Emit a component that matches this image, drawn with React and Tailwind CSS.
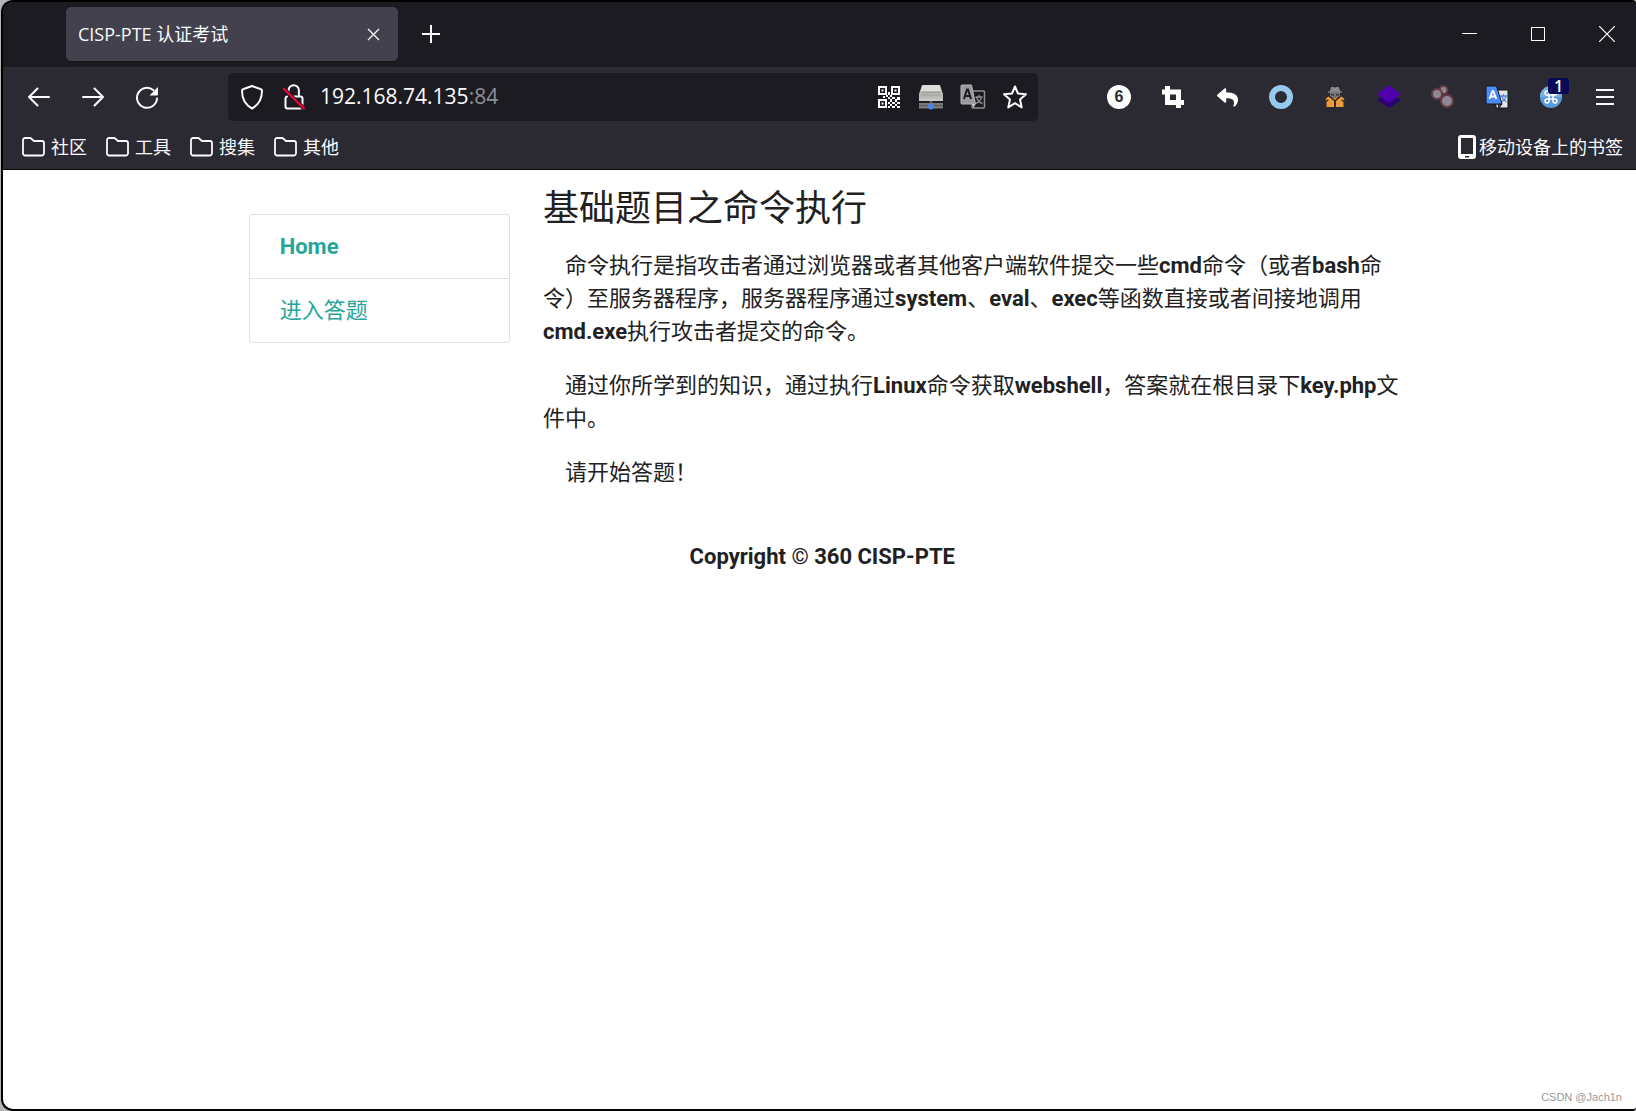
import React from "react";
import { FaReply } from "react-icons/fa";

const FOLDERS = ["社区", "工具", "搜集", "其他"];

const BackIcon = () => (
  <svg width="22" height="20" viewBox="0 0 22 20" fill="none" stroke="#fbfbfe" strokeWidth="2" strokeLinecap="round" strokeLinejoin="round">
    <path d="M21 10H1M9.500 1.500 1 10l8.500 8.500" />
  </svg>
);

const ForwardIcon = () => (
  <svg width="22" height="20" viewBox="0 0 22 20" fill="none" stroke="#fbfbfe" strokeWidth="2" strokeLinecap="round" strokeLinejoin="round">
    <path d="M1 10h20M12.500 1.500 21 10l-8.500 8.500" />
  </svg>
);

const ReloadIcon = () => (
  <svg width="24" height="24" viewBox="0 0 24 24" fill="none" stroke="#fbfbfe" strokeWidth="2" strokeLinecap="round">
    <path d="M22 13.500A10 10 0 1 1 18.500 5.200" />
    <path d="M23 2v7.500a1 1 0 0 1-1 1h-7.500z" fill="#fbfbfe" stroke="none" />
  </svg>
);

const ShieldIcon = () => (
  <svg width="24" height="26" viewBox="0 0 24 26" fill="none" stroke="#fbfbfe" strokeWidth="2" strokeLinejoin="round">
    <path d="M12 2 21 5.300q1 .4 1 1.500C22 14.500 18.500 21 12 24.500 5.500 21 2 14.500 2 6.800q0-1.100 1-1.500z" />
  </svg>
);

const LockIcon = () => (
  <svg width="24" height="26" viewBox="0 0 24 26" fill="none" stroke="#fbfbfe" strokeWidth="2" strokeLinecap="round">
    <path d="M6.500 8V6.500a5.200 5.200 0 0 1 10.400 0V12" />
    <path d="M10 12.500h8.500a2 2 0 0 1 2 2v8a2 2 0 0 1-2 2h-13a2 2 0 0 1-2-2v-8q0-1.500 1.500-2" />
    <path d="M1.500 4.500 22 24.500" stroke="#1c1b22" strokeWidth="4" />
    <path d="M1.500 4.500 22 24.500" stroke="#ff0039" />
  </svg>
);

const QrIcon = () => (
  <svg width="22" height="22" viewBox="0 0 22 22" fill="#fbfbfe">
    <path fillRule="evenodd" d="M0 0h9v9H0zM2 2v5h5V2zM13 0h9v9h-9zM15 2v5h5V2zM0 13h9v9H0zM2 15v5h5v-5z" />
    <path d="M3.500 3.500h2v2h-2zM16.500 3.500h2v2h-2zM3.500 16.500h2v2h-2z" />
    <path d="M10 6h2v3h-2zM8 9h2v2H8zM12 9h2v2h-2zM5 10h2v2H5zM10 11h2v2h-2zM14 11h3v2h-3zM19 11h3v3h-3zM12 13h2v3h-2zM17 13h2v3h-2zM10 16h2v2h-2zM14 16h3v2h-3zM19 16h3v2h-3zM12 18h2v2h-2zM17 18h2v2h-2zM10 20h2v2h-2zM14 20h3v2h-3zM19 20h3v2h-3z" />
  </svg>
);

const DriveIcon = () => (
  <svg width="24" height="26" viewBox="0 0 24 26">
    <path d="M3 1h18l3 9v7H0v-7z" fill="#b9b9b6" />
    <path d="M3.500 1h17l1.500 6H2z" fill="#deded9" />
    <path d="M3 8h18v1H3zM2.500 10.500h19v1h-19z" fill="#9b9b98" />
    <path d="M0 14.500h24V17H0z" fill="#c8c8c5" />
    <path d="M10.500 17h3v3h-3z" fill="#5a5a5a" />
    <path d="M0 19h24v5.500H0z" fill="#7b7b79" />
    <path d="M0 21h24v1H0z" fill="#565655" />
    <circle cx="12" cy="22.500" r="3" fill="#4786e8" />
  </svg>
);

const PageTranslateIcon = () => (
  <svg width="26" height="26" viewBox="0 0 26 26">
    <rect x="12" y="7" width="12.500" height="17" rx="1" fill="#1c1b22" stroke="#8f8f92" strokeWidth="1.500" />
    <path d="M15.500 13h7M19 11v2M21.500 13c-.5 3-3 5.500-6 6.500M16.500 13c1 3 3 5.500 6 6.500" stroke="#8f8f92" strokeWidth="1.400" fill="none" />
    <path d="M2 1h9.500l4 19H2a1 1 0 0 1-1-1V2a1 1 0 0 1 1-1z" fill="#9a9a9c" stroke="#b5b5b7" />
    <path d="m12 20 3.500 0-2 4z" fill="#c7c7c8" />
    <path d="M4 15 7 5.500h1L11 15M5 12h5" stroke="#1c1b22" strokeWidth="2" fill="none" />
  </svg>
);

const StarIcon = () => (
  <svg width="24" height="24" viewBox="0 0 24 24" fill="none" stroke="#fbfbfe" strokeWidth="2" strokeLinejoin="round">
    <path d="m12 1.500 3 7 8 .7-6 5.200 1.700 8L12 18.200l-6.700 4.200 1.700-8L1 9.200l8-.7z" />
  </svg>
);

const CropIcon = () => (
  <svg width="22" height="22" viewBox="0 0 22 22" fill="none" stroke="#fff" strokeWidth="5">
    <path d="M0 6h16.500v16M5.500 0v16.500H22" />
  </svg>
);

const RingIcon = () => (
  <svg width="24" height="24" viewBox="0 0 24 24">
    <circle cx="12" cy="12" r="9" fill="none" stroke="#97c9ee" strokeWidth="6" />
  </svg>
);

const SpyIcon = () => (
  <svg width="20" height="22" viewBox="0 0 20 22">
    <path d="M5 5 6 1.500Q6.500.500 8 1l2 .6L12 1q1.500-.500 2 .5L15 5l2 .7v1H3v-1z" fill="#8a8a8a" />
    <path d="M5 7h10v2.500q-1 2-5 2t-5-2z" fill="#777" />
    <path d="M6 8h3v1.500H6zM11 8h3v1.500h-3z" fill="#333" />
    <path d="M6.500 10.500 10 12l3.500-1.500L10 14z" fill="#e8912d" />
    <path d="m.5 13 3-2.500L9 15v6H1.500v-5L4 14l-1.500-.5-1 1zM19.500 13l-3-2.500L11 15v6h7.500v-5L16 14l1.500-.5 1 1z" fill="#f09a36" />
  </svg>
);

const LayersIcon = () => (
  <svg width="26" height="24" viewBox="0 0 26 24">
    <path d="m1 15 12-7 12 7-12 8z" fill="#2b0073" />
    <path d="M13 0 25 9 13 18 1 9z" fill="#4e00ab" />
  </svg>
);

const DotsIcon = () => (
  <svg width="24" height="24" viewBox="0 0 24 24" fill="#8c8790" stroke="#663a42" strokeWidth="2">
    <circle cx="12.500" cy="5" r="4" />
    <circle cx="6" cy="9" r="5" />
    <circle cx="16" cy="16" r="6" />
  </svg>
);

const TranslateIcon = () => (
  <svg width="24" height="24" viewBox="0 0 24 24" stroke="#15151a" strokeLinejoin="round">
    <rect x="11" y="5" width="12" height="18" rx="1" fill="#e6e6e6" />
    <path d="M15 11h7M18.500 9v2M21 11c-.5 3-2.500 5-5 6M16.500 11c1 2.500 3 5 5 6" stroke="#5187e8" strokeWidth="1.300" fill="none" />
    <path d="m13 19 4 0-3 4z" fill="#2a56c6" />
    <path d="M2 1h9.500L17 19H2q-1 0-1-1V2q0-1 1-1z" fill="#4b8bf5" />
    <path d="m4.500 14 3-8h.8l3 8M5.500 11.500h5" stroke="#fff" strokeWidth="1.800" fill="none" />
  </svg>
);

const CommandIcon = () => (
  <svg width="22" height="22" viewBox="0 0 22 22">
    <circle cx="11" cy="11" r="11" fill="#5b9ad8" />
    <path d="M0 11a11 11 0 0 1 22 0z" fill="#76b0e6" />
    <path d="M9 9V7a2 2 0 1 0-2 2h8a2 2 0 1 0-2-2v8a2 2 0 1 0 2-2H7a2 2 0 1 0 2 2V9" fill="none" stroke="#fff" strokeWidth="1.500" />
  </svg>
);

const FolderIcon = () => (
  <svg width="23" height="20" viewBox="0 0 23 20" fill="none" stroke="#fbfbfe" strokeWidth="1.800" strokeLinejoin="round">
    <path d="M1 16.500V3a2 2 0 0 1 2-2h5.500L12 4h8a2 2 0 0 1 2 2v10.500a2.200 2.200 0 0 1-2 2H3a2 2 0 0 1-2-2z" />
  </svg>
);

const PhoneIcon = () => (
  <svg width="18" height="24" viewBox="0 0 18 24">
    <rect width="18" height="24" rx="3" fill="#fff" />
    <path d="M3 3h12v16H3z" fill="#2b2a33" />
    <path d="M7 21h4v1.500H7z" fill="#2b2a33" />
  </svg>
);

const TabBar = () => (
  <div className="flex h-[65px] items-center bg-[#1c1b22] pb-px pl-[63px] pr-[21px]">
    <div className="flex h-[54px] w-[332px] items-center justify-between rounded-[5px] bg-[#42414d] pl-3 pr-[18px] shadow">
      <span className="text-lg">CISP-PTE 认证考试</span>
      <button aria-label="关闭标签页">
        <svg width="13" height="13" viewBox="0 0 13 13" stroke="#fbfbfe" strokeWidth="1.300">
          <path d="m1 1 11 11M12 1 1 12" />
        </svg>
      </button>
    </div>
    <button aria-label="新建标签页" className="ml-6">
      <svg width="18" height="18" viewBox="0 0 18 18" stroke="#fbfbfe" strokeWidth="2">
        <path d="M9 0v18M0 9h18" />
      </svg>
    </button>
    <div className="ml-auto flex items-center gap-[53px]">
      <button aria-label="最小化">
        <svg width="16" height="16" viewBox="0 0 16 16" stroke="#fff">
          <path d="M1 7.500h15" />
        </svg>
      </button>
      <button aria-label="最大化">
        <svg width="16" height="16" viewBox="0 0 16 16" fill="none" stroke="#fff">
          <rect x="1.500" y="1.500" width="13" height="13" />
        </svg>
      </button>
      <button aria-label="关闭">
        <svg width="16" height="16" viewBox="0 0 16 16" stroke="#fff" strokeWidth="1.200">
          <path d="m0 0 16 16M16 0 0 16" />
        </svg>
      </button>
    </div>
  </div>
);

const ToolButton = ({ label, children }) => (
  <button aria-label={label} className="flex h-12 w-[54px] items-center justify-center">
    {children}
  </button>
);

const UrlButton = ({ label, children }) => (
  <button aria-label={label} className="flex h-12 w-[42px] items-center justify-center">
    {children}
  </button>
);

const NavBar = () => (
  <div className="flex items-center pl-[9px] pr-1 pt-[6px]">
    <ToolButton label="后退">
      <BackIcon />
    </ToolButton>
    <ToolButton label="前进">
      <ForwardIcon />
    </ToolButton>
    <ToolButton label="刷新">
      <ReloadIcon />
    </ToolButton>
    <div className="mx-[54px] flex h-12 flex-1 items-center rounded-[5px] bg-[#1c1b22] pl-[3px] pr-[2px]">
      <UrlButton label="跟踪保护">
        <ShieldIcon />
      </UrlButton>
      <UrlButton label="连接不安全">
        <LockIcon />
      </UrlButton>
      <a href="#" className="ml-[5px] flex-1 text-[21px]">
        192.168.74.135<span className="text-[#8f8f97]">:84</span>
      </a>
      <UrlButton label="二维码">
        <QrIcon />
      </UrlButton>
      <UrlButton label="代理">
        <DriveIcon />
      </UrlButton>
      <UrlButton label="翻译此页">
        <PageTranslateIcon />
      </UrlButton>
      <UrlButton label="添加书签">
        <StarIcon />
      </UrlButton>
    </div>
    <ToolButton label="计数">
      <span className="flex h-6 w-6 items-center justify-center rounded-full bg-white font-['Liberation_Sans'] text-base font-bold text-[#2b2a33]">
        6
      </span>
    </ToolButton>
    <ToolButton label="截图">
      <CropIcon />
    </ToolButton>
    <ToolButton label="撤销">
      <FaReply size={21} color="#fff" />
    </ToolButton>
    <ToolButton label="容器">
      <RingIcon />
    </ToolButton>
    <ToolButton label="隐私">
      <SpyIcon />
    </ToolButton>
    <ToolButton label="图层">
      <LayersIcon />
    </ToolButton>
    <ToolButton label="代理切换">
      <DotsIcon />
    </ToolButton>
    <ToolButton label="翻译">
      <TranslateIcon />
    </ToolButton>
    <ToolButton label="快捷命令">
      <span className="relative">
        <CommandIcon />
        <span className="absolute -right-[7px] -top-2 flex h-4 w-[21px] items-center justify-center rounded-[3px] bg-[#070b57] text-base font-semibold leading-4">
          1
        </span>
      </span>
    </ToolButton>
    <ToolButton label="菜单">
      <svg width="18" height="16" viewBox="0 0 18 16" stroke="#fbfbfe" strokeWidth="2">
        <path d="M0 1h18M0 8h18M0 15h18" />
      </svg>
    </ToolButton>
  </div>
);

const Bookmarks = () => (
  <div className="flex h-[49px] items-center justify-between border-b border-[#0c0c0d] pl-[19px] pr-[13px] pt-1 text-lg">
    <div className="flex gap-[19px]">
      {FOLDERS.map((name) => (
        <button key={name} className="flex items-center gap-[6px]">
          <FolderIcon />
          {name}
        </button>
      ))}
    </div>
    <button className="flex items-center gap-[3px]">
      <PhoneIcon />
      移动设备上的书签
    </button>
  </div>
);

const Page = () => (
  <main className="flex-1 bg-white font-[Roboto,'Noto_Sans_CJK_SC',sans-serif] text-[22px] leading-[33px] text-[#212121]">
    <div className="mx-auto flex w-[72%] px-px">
      <div className="w-1/4 px-4 pt-11">
        <nav className="rounded-[3px] border border-[#e0e0e0] text-[#26a69a]">
          <a href="#" className="block border-b border-[#e0e0e0] px-[30px] py-[15px] font-bold">
            Home
          </a>
          <a href="#" className="block px-[30px] py-[15px]">
            进入答题
          </a>
        </nav>
      </div>
      <div className="w-3/4 pl-[17px] pr-1 pt-5">
        <h1 className="text-4xl leading-[39px]">基础题目之命令执行</h1>
        <p className="mt-5 indent-[22px]">
          命令执行是指攻击者通过浏览器或者其他客户端软件提交一些<b>cmd</b>命令（或者<b>bash</b>命令）至服务器程序，服务器程序通过<b>system</b>、<b>eval</b>、<b>exec</b>等函数直接或者间接地调用<b>cmd.exe</b>执行攻击者提交的命令。
        </p>
        <p className="mt-[21px] indent-[22px]">
          通过你所学到的知识，通过执行<b>Linux</b>命令获取<b>webshell</b>，答案就在根目录下<b>key.php</b>文件中。
        </p>
        <p className="mt-[21px] indent-[22px]">请开始答题！</p>
      </div>
    </div>
    <footer className="mt-[51px] text-center">
      &nbsp;<b>Copyright</b> © <b>360 CISP-PTE</b>
    </footer>
  </main>
);

export default function App() {
  return (
    <div className="flex min-h-screen bg-[#b4b4b4] pl-px">
      <div className="relative flex flex-1 flex-col overflow-hidden rounded-l-[12px] rounded-r-[4px] border-y-2 border-l-2 border-black bg-[#2b2a33] font-['Open_Sans','Noto_Sans_CJK_SC',sans-serif] text-[#fbfbfe]">
        <TabBar />
        <NavBar />
        <Bookmarks />
        <Page />
        <span className="absolute bottom-1 right-[14px] font-['Liberation_Sans'] text-[11px] text-[#999]">
          CSDN @Jach1n
        </span>
      </div>
    </div>
  );
}
